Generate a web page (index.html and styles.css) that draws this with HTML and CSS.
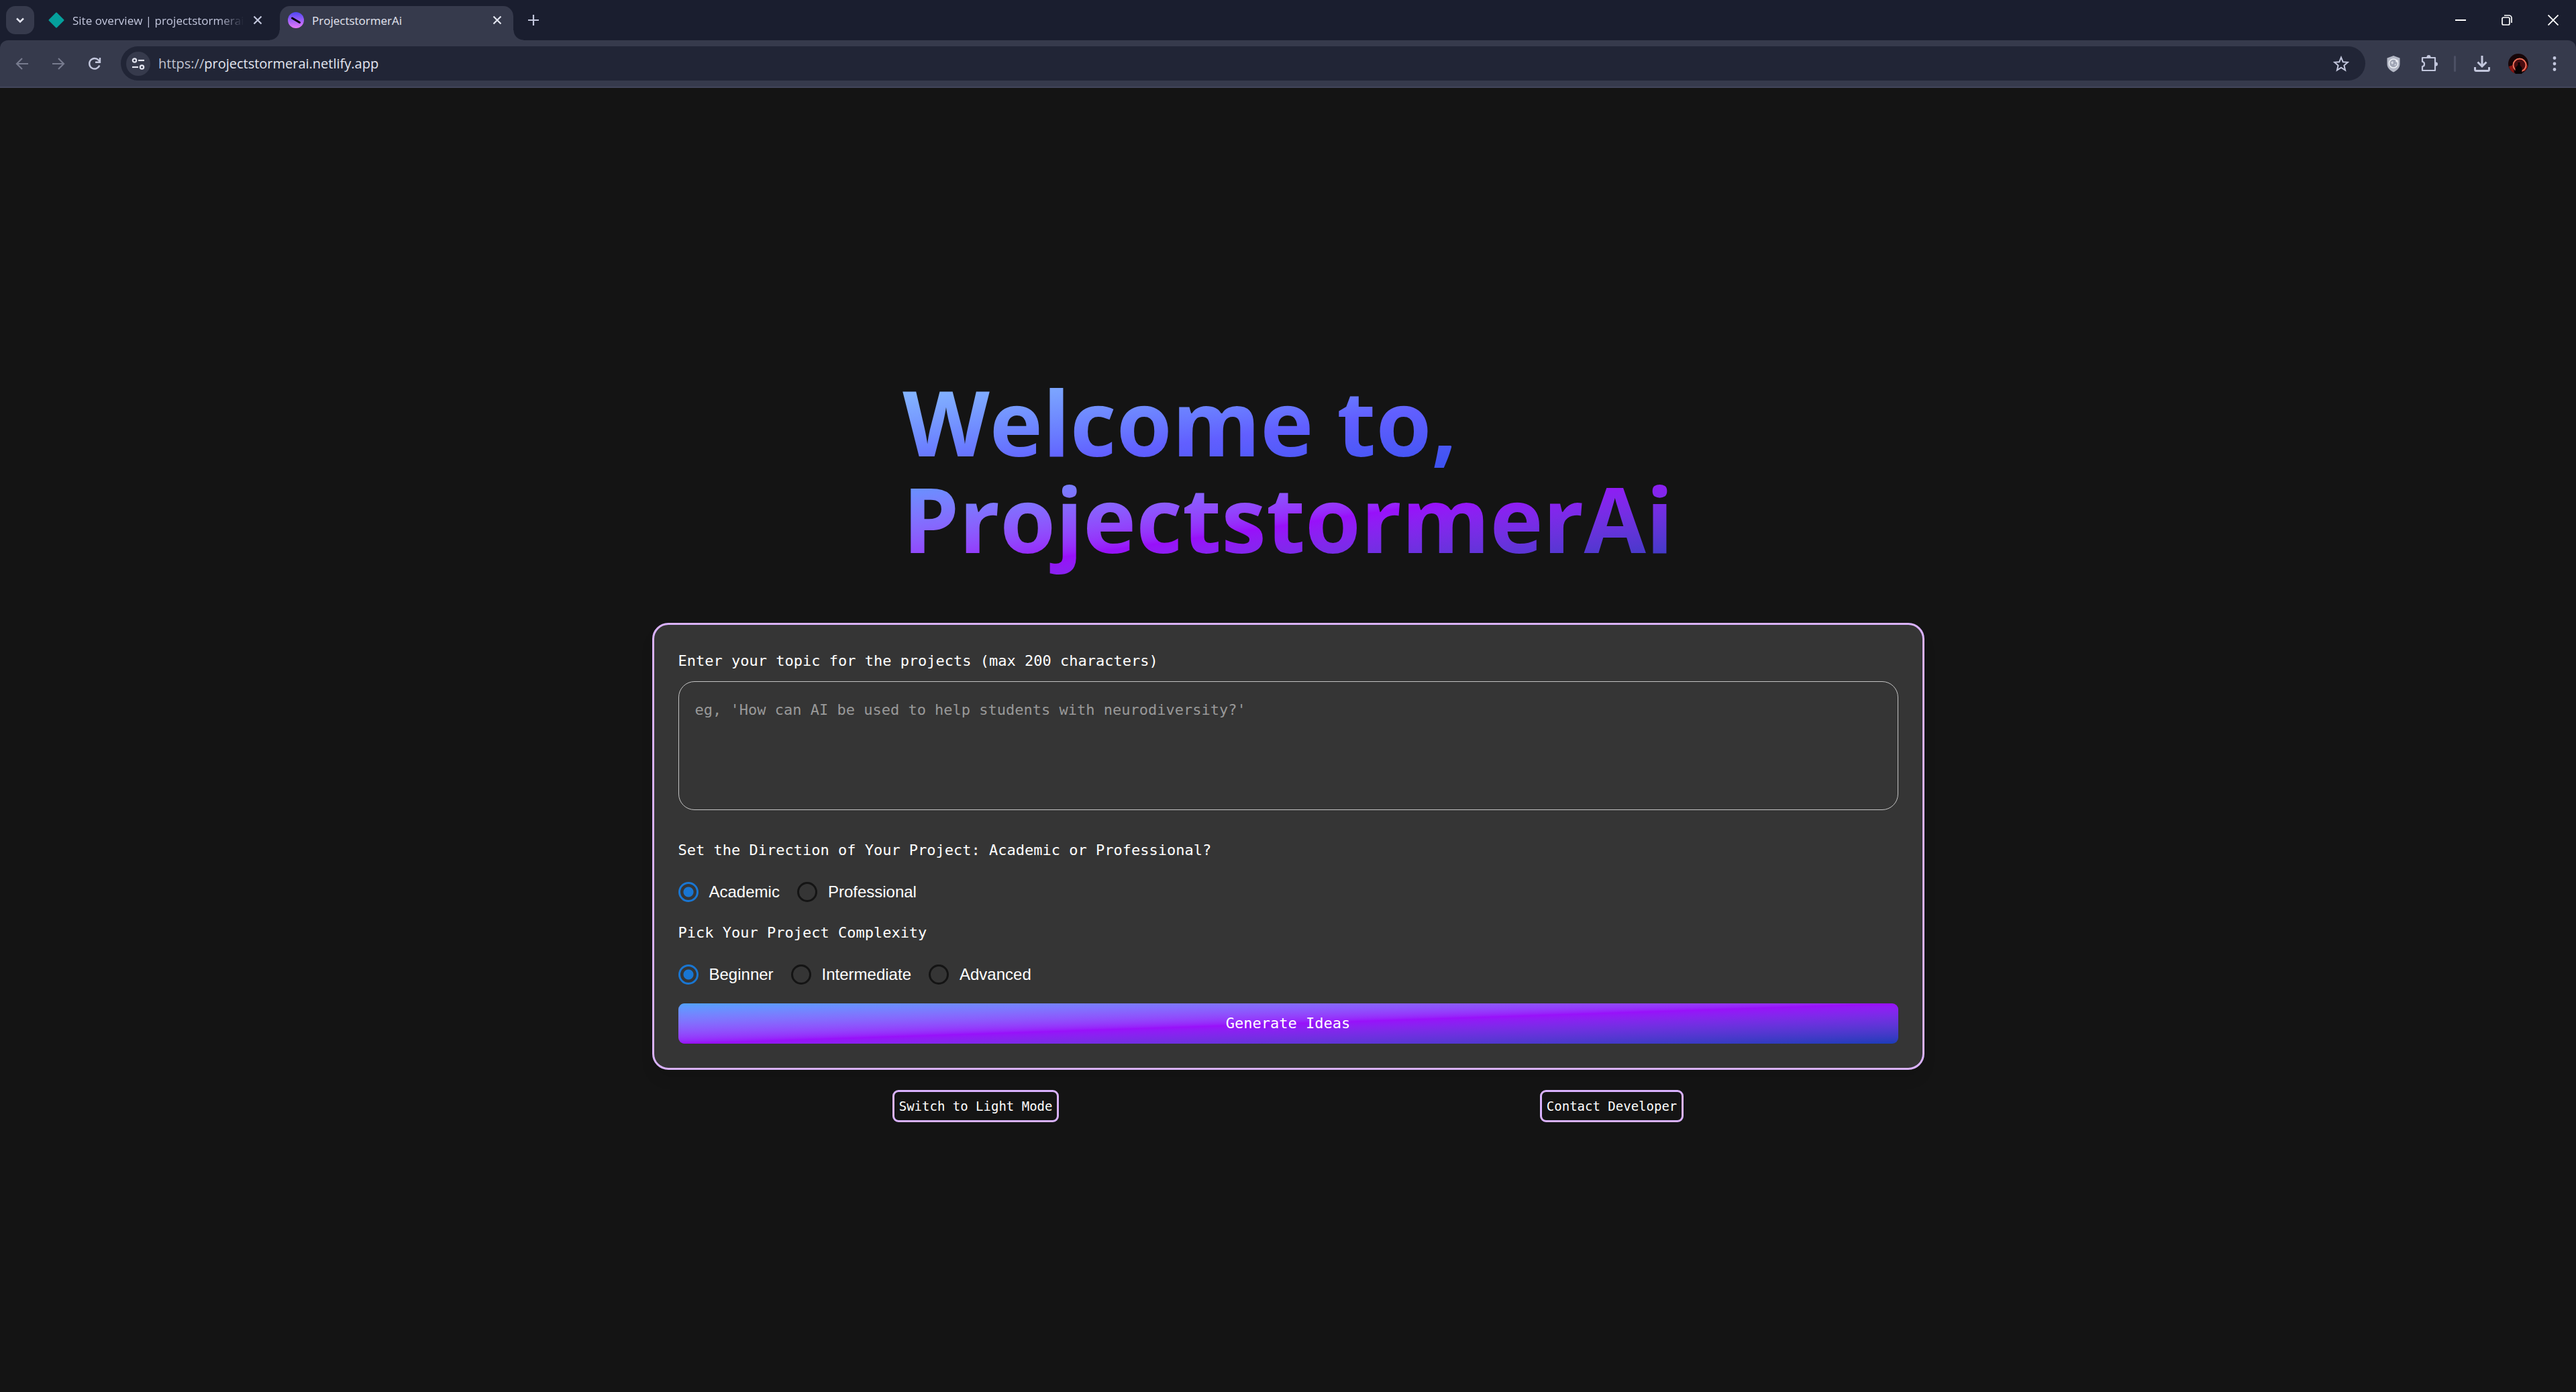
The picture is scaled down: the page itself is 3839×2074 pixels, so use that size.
FILE: index.html
```html
<!DOCTYPE html>
<html lang="en">
<head>
<meta charset="utf-8">
<title>ProjectstormerAi</title>
<link rel="stylesheet" href="styles.css">
</head>
<body>
<header class="browser">
  <div class="tab-strip">
    <button class="tab-search" type="button" aria-label="Search tabs"><svg width="18" height="18" viewBox="0 0 18 18"><path d="M4 6.500l5 5 5-5" fill="none" stroke="currentColor" stroke-width="2.500"/></svg></button>
    <div class="tab">
      <svg class="favicon" width="24" height="24" viewBox="0 0 24 24"><path d="M12 1.500L22.500 12 12 22.500 1.500 12z" fill="#05a09c" stroke="#05a09c" stroke-width="2" stroke-linejoin="round"/></svg>
      <span class="tab-title tab-title-faded">Site overview | projectstormerai</span>
      <button class="icon-button tab-close" type="button" aria-label="Close tab"><svg width="16" height="16" viewBox="0 0 16 16"><path d="M2.500 2.500l11 11M13.500 2.500l-11 11" stroke="currentColor" stroke-width="2.200"/></svg></button>
    </div>
    <div class="tab tab-active">
      <svg class="favicon" width="24" height="24" viewBox="0 0 24 24"><defs><linearGradient id="fav" x1="0" y1="0" x2="0" y2="1"><stop offset="0" stop-color="#4f46f5"/><stop offset="1" stop-color="#e879f9"/></linearGradient></defs><circle cx="12" cy="12" r="12" fill="url(#fav)"/><path d="M6.500 9l11 6.500" stroke="#000" stroke-width="3" stroke-linecap="round"/></svg>
      <span class="tab-title">ProjectstormerAi</span>
      <button class="icon-button tab-close" type="button" aria-label="Close tab"><svg width="16" height="16" viewBox="0 0 16 16"><path d="M2.500 2.500l11 11M13.500 2.500l-11 11" stroke="currentColor" stroke-width="2.200"/></svg></button>
    </div>
    <button class="icon-button new-tab" type="button" aria-label="New tab"><svg width="18" height="18" viewBox="0 0 18 18"><path d="M9 1v16M1 9h16" stroke="currentColor" stroke-width="2.200"/></svg></button>
    <div class="window-controls">
      <button class="icon-button" type="button" aria-label="Minimize"><svg width="16" height="16" viewBox="0 0 16 16"><path d="M0 8h16" stroke="currentColor" stroke-width="2"/></svg></button>
      <button class="icon-button" type="button" aria-label="Restore"><svg width="16" height="16" viewBox="0 0 16 16" fill="none" stroke="currentColor" stroke-width="1.700"><rect x="1" y="4" width="11" height="11" rx="2"/><path d="M4 1h7a4 4 0 0 1 4 4v7"/></svg></button>
      <button class="icon-button" type="button" aria-label="Close window"><svg width="16" height="16" viewBox="0 0 16 16"><path d="M0.500 0.500l15 15M15.500 0.500l-15 15" stroke="currentColor" stroke-width="1.800"/></svg></button>
    </div>
  </div>
  <div class="toolbar">
    <nav class="history" aria-label="History">
      <button class="icon-button dim" type="button" aria-label="Back"><svg width="20" height="20" viewBox="0 0 20 20" fill="none" stroke="currentColor" stroke-width="2.200"><path d="M19 10H3M10 2l-8 8 8 8"/></svg></button>
      <button class="icon-button dim" type="button" aria-label="Forward"><svg width="20" height="20" viewBox="0 0 20 20" fill="none" stroke="currentColor" stroke-width="2.200"><path d="M1 10h16M10 2l8 8-8 8"/></svg></button>
      <button class="icon-button" type="button" aria-label="Reload"><svg width="20" height="20" viewBox="0 0 20 20" fill="none" stroke="currentColor" stroke-width="2.400"><path d="M17.300 12.500a7.800 7.800 0 1 1-1.500-8l2.200 2.500M18 1v6.800h-7"/></svg></button>
    </nav>
    <div class="address-bar">
      <button class="site-info" type="button" aria-label="View site information"><svg width="20" height="20" viewBox="0 0 20 20" fill="none" stroke="currentColor" stroke-width="2.200"><circle cx="4.500" cy="5" r="2.700"/><path d="M10 5h9"/><circle cx="15.500" cy="15" r="2.700"/><path d="M1 15h9"/></svg></button>
      <span class="url"><span class="scheme">https://</span>projectstormerai.netlify.app</span>
      <button class="icon-button star" type="button" aria-label="Bookmark"><svg width="24" height="24" viewBox="0 0 24 24"><path d="M12 2.500l2.700 6.700 7.100.6-5.400 4.700 1.700 7-6.100-3.800-6.100 3.800 1.700-7L2.200 9.800l7.100-.6z" fill="none" stroke="currentColor" stroke-width="2"/></svg></button>
    </div>
    <div class="extensions">
      <button class="icon-button" type="button" aria-label="Shield"><svg width="24" height="26" viewBox="0 0 24 26"><path d="M12 1l9.500 3.500V13c0 6-4 10-9.500 12.500C6.500 23 2.500 19 2.500 13V4.500z" fill="#b4b8c6"/><circle cx="12" cy="12.500" r="6.500" fill="#a0a5b5" stroke="#eef0f6" stroke-width="1.500"/><path d="M8 11l3-2 1 3-2 2zM13 14l3-1-1 3z" fill="#d6d9e3"/><circle cx="17" cy="9" r="1.800" fill="#eef0f6"/></svg></button>
      <button class="icon-button" type="button" aria-label="Extensions"><svg width="28" height="28" viewBox="0 0 28 28"><path d="M4 5h19v19H4v-6c4 0 4-7 0-7z" fill="none" stroke="currentColor" stroke-width="2.200" stroke-linejoin="round"/><path d="M10.500 4a3 3 0 0 1 6 0zM24 11.500a3 3 0 0 1 0 6z" fill="currentColor"/></svg></button>
      <span class="divider"></span>
      <button class="icon-button" type="button" aria-label="Downloads"><svg width="24" height="24" viewBox="0 0 24 24" fill="none" stroke="currentColor" stroke-width="3"><path d="M12 0v15M5.500 9.500L12 16l6.500-6.500M1.500 17v3.500a2 2 0 0 0 2 2h17a2 2 0 0 0 2-2V17"/></svg></button>
      <button class="icon-button profile" type="button" aria-label="Profile"><svg width="30" height="30" viewBox="0 0 30 30"><circle cx="15" cy="15" r="15" fill="#170608"/><path d="M1 19a15 15 0 0 0 8 10l-2-12zM29 19a15 15 0 0 1-6 8l4-14z" fill="#8c1512"/><circle cx="17" cy="17" r="9.500" fill="#4a0c10" stroke="#f0705a" stroke-width="2"/><path d="M10.500 30v-9l4-4v-4h3v4l3 4v9z" fill="#080304"/></svg></button>
      <button class="icon-button" type="button" aria-label="Menu"><svg width="6" height="22" viewBox="0 0 6 22" fill="currentColor"><circle cx="3" cy="2.500" r="2.400"/><circle cx="3" cy="11" r="2.400"/><circle cx="3" cy="19.500" r="2.400"/></svg></button>
    </div>
  </div>
</header>
<main class="page">
  <h1 class="hero"><span class="hero-line hero-welcome">Welcome to,</span><span class="hero-line hero-name">ProjectstormerAi</span></h1>
  <form class="card">
    <label class="prompt" for="topic">Enter your topic for the projects (max 200 characters)</label>
    <textarea class="topic" id="topic" maxlength="200" placeholder="eg, 'How can AI be used to help students with neurodiversity?'"></textarea>
    <fieldset class="choices">
      <legend class="prompt">Set the Direction of Your Project: Academic or Professional?</legend>
      <div class="options">
        <label class="option"><input class="radio" type="radio" name="direction" checked>Academic</label>
        <label class="option"><input class="radio" type="radio" name="direction">Professional</label>
      </div>
    </fieldset>
    <fieldset class="choices">
      <legend class="prompt">Pick Your Project Complexity</legend>
      <div class="options">
        <label class="option"><input class="radio" type="radio" name="complexity" checked>Beginner</label>
        <label class="option"><input class="radio" type="radio" name="complexity">Intermediate</label>
        <label class="option"><input class="radio" type="radio" name="complexity">Advanced</label>
      </div>
    </fieldset>
    <button class="generate" type="button">Generate Ideas</button>
  </form>
  <div class="actions">
    <button class="outline-button" type="button">Switch to Light Mode</button>
    <button class="outline-button" type="button">Contact Developer</button>
  </div>
</main>
</body>
</html>
```

FILE: styles.css
```css
:root {
  --strip: #1a1e2f;
  --toolbar: #363a4c;
  --field: #212536;
  --chrome-icon: #c3c7dd;
  --lilac: #dab2ff;
  --mono: "DejaVu Sans Mono", monospace;
}

* {
  box-sizing: border-box;
}

body {
  margin: 0;
  min-height: 100vh;
  display: flex;
  flex-direction: column;
  background: #141414;
  color: #fff;
  font-family: "Open Sans", sans-serif;
}

button {
  margin: 0;
  padding: 0;
  border: 0;
  background: none;
  color: inherit;
  font: inherit;
}

svg {
  display: block;
}

.icon-button {
  display: grid;
  place-items: center;
}

/* Browser frame */
.browser {
  background: var(--strip);
  color: var(--chrome-icon);
}

.tab-strip {
  display: flex;
  height: 60px;
  padding: 9px 0 0 9px;
}

.tab-search {
  display: grid;
  place-items: center;
  width: 42px;
  height: 42px;
  margin-right: 9px;
  border-radius: 14px;
  background: var(--toolbar);
  color: #e3e5f0;
}

.tab {
  position: relative;
  display: flex;
  align-items: center;
  width: 348px;
  height: 51px;
  padding: 0 16px 9px 12px;
  font-size: 17px;
}

.tab-active {
  margin-left: 9px;
  border-radius: 15px 15px 0 0;
  background: var(--toolbar);
  color: #e3e5f0;
}

.tab-active::before,
.tab-active::after {
  content: "";
  position: absolute;
  bottom: 0;
  width: 15px;
  height: 15px;
}

.tab-active::before {
  left: -15px;
  background: radial-gradient(circle at 0 0, transparent 14px, var(--toolbar) 15px);
}

.tab-active::after {
  right: -15px;
  background: radial-gradient(circle at 100% 0, transparent 14px, var(--toolbar) 15px);
}

.tab-title {
  flex: 1;
  margin: 0 12px;
  overflow: hidden;
  white-space: nowrap;
}

.tab-title-faded {
  mask-image: linear-gradient(to right, #000 85%, transparent);
}

.new-tab {
  width: 30px;
  height: 42px;
  margin-left: 15px;
}

.window-controls {
  display: flex;
  gap: 53px;
  height: 42px;
  margin-left: auto;
  padding-right: 26px;
  color: #fff;
}

.toolbar {
  display: flex;
  align-items: center;
  height: 71px;
  padding: 0 29px 0 23px;
  border-bottom: 2px solid #42465a;
  border-radius: 12px 12px 0 0;
  background: var(--toolbar);
}

.history {
  display: flex;
  gap: 34px;
  margin-right: 29px;
}

.dim {
  color: #777b8e;
}

.address-bar {
  flex: 1;
  display: flex;
  align-items: center;
  height: 51px;
  padding: 0 24px 0 8px;
  border-radius: 26px;
  background: var(--field);
}

.site-info {
  display: grid;
  place-items: center;
  width: 36px;
  height: 36px;
  border-radius: 50%;
  background: var(--toolbar);
  color: #e3e5f0;
}

.url {
  flex: 1;
  margin-left: 12px;
  color: #e3e5f0;
  font-size: 20px;
}

.scheme {
  color: #c0c3d0;
}

.extensions {
  display: flex;
  align-items: center;
  gap: 27px;
  margin-left: 30px;
}

.divider {
  width: 3px;
  height: 24px;
  margin-left: -4px;
  border-radius: 2px;
  background: #4c5064;
}

.profile {
  margin-right: 9px;
}

/* Page */
.page {
  flex: 1;
  display: flex;
  flex-direction: column;
  align-items: center;
  justify-content: center;
  padding: 46px 24px 24px;
}

.hero {
  display: flex;
  flex-direction: column;
  margin: 0 0 84px;
  font-size: 134px;
  font-weight: 700;
  line-height: 144px;
}

/* The extra padding lets the gradient reach under the descenders. */
.hero-line {
  margin-bottom: -20px;
  padding-bottom: 20px;
  background-clip: text;
  -webkit-background-clip: text;
  color: transparent;
}

.hero-welcome {
  background-image: linear-gradient(to bottom right in oklab, #8ec5ff, #615fff, #1447e6);
}

.hero-name {
  background-image: linear-gradient(to bottom right in oklab, #51a2ff, #9810fa, #193cb8);
}

.card {
  display: flex;
  flex-direction: column;
  width: 100%;
  max-width: 1896px;
  padding: 36px;
  border: 3px solid var(--lilac);
  border-radius: 24px;
  background: #353535;
  box-shadow: 0 15px 22px -4px rgb(0 0 0 / 10%);
}

.prompt {
  padding: 0;
  font-family: var(--mono);
  font-size: 22px;
  line-height: 36px;
}

.topic {
  height: 192px;
  margin: 12px 0 42px;
  padding: 24px;
  border: 1px solid #c4c4c4;
  border-radius: 24px;
  background: transparent;
  color: #fff;
  font-family: var(--mono);
  font-size: 22px;
  line-height: 36px;
  resize: none;
}

.topic::placeholder {
  color: #999;
}

.choices {
  margin: 0 0 12px;
  padding: 0;
  border: 0;
}

.options {
  display: flex;
  gap: 26px;
  padding: 26px 0 13px;
}

.option {
  display: flex;
  align-items: center;
  gap: 16px;
  font-family: "Liberation Sans", sans-serif;
  font-size: 24px;
  line-height: 36px;
}

.radio {
  appearance: none;
  width: 30px;
  height: 30px;
  margin: 0;
  border: 3px solid #141414;
  border-radius: 50%;
}

.radio:checked {
  border-color: #1976d2;
  background: radial-gradient(circle, #1976d2 7px, transparent 8px);
}

.generate {
  height: 60px;
  border-radius: 9px;
  background: linear-gradient(to bottom right in oklab, #51a2ff, #9810fa, #193cb8);
  font-family: var(--mono);
  font-size: 22px;
}

.actions {
  display: flex;
  justify-content: space-around;
  width: 100%;
  max-width: 1896px;
  margin-top: 30px;
}

.outline-button {
  height: 48px;
  padding: 0 7px;
  border: 3px solid var(--lilac);
  border-radius: 9px;
  font-family: var(--mono);
  font-size: 19px;
}
```
